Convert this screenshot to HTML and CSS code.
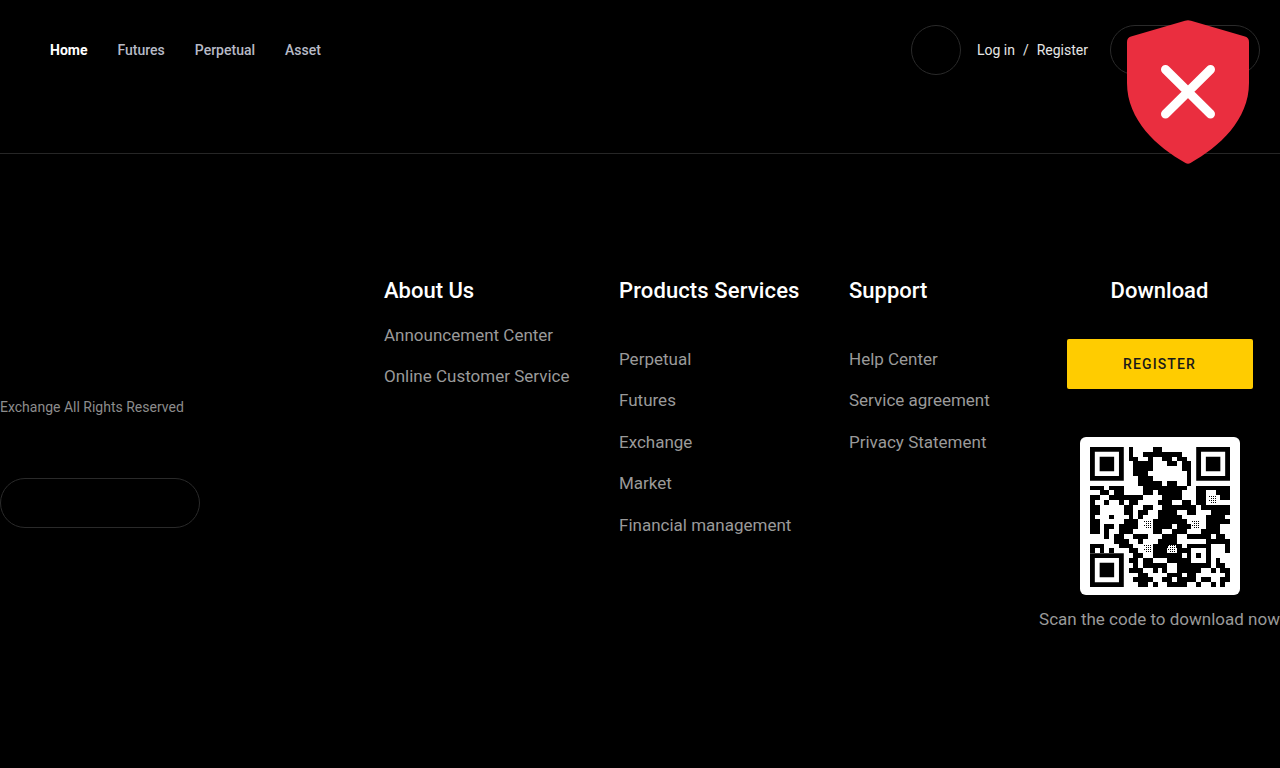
FILE: index.html
```html
<!DOCTYPE html>
<html lang="en">
<head>
<meta charset="utf-8">
<title>Exchange</title>
<link rel="stylesheet" href="styles.css">
</head>
<body>
<header class="header">
  <nav class="nav">
    <a class="nav-link active">Home</a>
    <a class="nav-link">Futures</a>
    <a class="nav-link">Perpetual</a>
    <a class="nav-link">Asset</a>
  </nav>
  <div class="actions">
    <span class="circle"></span>
    <div class="auth"><a>Log in</a><span>/</span><a>Register</a></div>
    <span class="pill"></span>
  </div>
</header>
<svg class="shield" viewBox="0 0 122 144" aria-hidden="true">
  <path class="shield-body" d="M58 .7Q61 -.2 64 .7L118 16.5Q122 17.7 122 22V63C122 100 92 127 63.5 143Q61 144.4 58.5 143C30 127 0 100 0 63V22Q0 17.7 4 16.5Z"/>
  <path class="shield-x" d="M38.5 49.5L83.5 94M83.5 49.5L38.5 94"/>
</svg>
<footer class="footer">
  <div class="brand">
    <p class="copy">Exchange All Rights Reserved</p>
    <span class="brand-pill"></span>
  </div>
  <div class="cols">
    <section class="col col-about">
      <h3>About Us</h3>
      <ul class="links">
        <li>Announcement Center</li>
        <li>Online Customer Service</li>
      </ul>
    </section>
    <section class="col col-products">
      <h3 class="wide">Products Services</h3>
      <ul class="links links-low">
        <li>Perpetual</li>
        <li>Futures</li>
        <li>Exchange</li>
        <li>Market</li>
        <li>Financial management</li>
      </ul>
    </section>
    <section class="col col-support">
      <h3>Support</h3>
      <ul class="links links-low">
        <li>Help Center</li>
        <li>Service agreement</li>
        <li>Privacy Statement</li>
      </ul>
    </section>
    <section class="col col-download">
      <h3>Download</h3>
      <button class="register" type="button">REGISTER</button>
      <div class="qr-card">
        <svg class="qr" viewBox="0 0 29 29" aria-label="QR code">
          <defs>
            <g id="patch">
              <rect class="qr-patch-bg" width="1.67" height="1.67"/>
              <path class="qr-patch-dots" d="M0 .21H1.67M.42 .63H1.67M0 1.04H1.67M.42 1.46H1.67"/>
            </g>
          </defs>
          <path class="qr-finder" d="M0 0h7v7h-7zM1 1v5h5v-5zM2 2h3v3h-3zM22 0h7v7h-7zM23 1v5h5v-5zM24 2h3v3h-3zM0 22h7v7h-7zM1 23v5h5v-5zM2 24h3v3h-3z"/>
          <path class="qr-runs" d="M8 .5h1M13 .5h2M8 1.5h1M11 1.5h8M8 2.5h2M12 2.5h1M15 2.5h2M18 2.5h2M9 3.5h4M16 3.5h2M19 3.5h2M9 4.5h4M19 4.5h2M9 5.5h3M20 5.5h1M10 6.5h3M20 6.5h1M10 7.5h4M14 7.5h1M16 7.5h2M20 7.5h1M0 8.5h3M4 8.5h3M11 8.5h9M22 8.5h7M2 9.5h2M5 9.5h2M11 9.5h2M14 9.5h5M22 9.5h2M26 9.5h3M0 10.5h2M4 10.5h7M15 10.5h4M22 10.5h2M27 10.5h2M0 11.5h1M3 11.5h1M6 11.5h1M8 11.5h2M14 11.5h3M19 11.5h2M22 11.5h2M0 12.5h2M7 12.5h2M11 12.5h2M15 12.5h7M23 12.5h6M0 13.5h2M7 13.5h2M10 13.5h2M14 13.5h4M20 13.5h2M25 13.5h4M0 14.5h1M4 14.5h1M8 14.5h1M10 14.5h1M14 14.5h5M24 14.5h4M0 15.5h2M7 15.5h3M13 15.5h7M24 15.5h5M0 16.5h2M3 16.5h2M6 16.5h4M13 16.5h4M18 16.5h3M24 16.5h3M0 17.5h2M3 17.5h1M6 17.5h3M13 17.5h2M17 17.5h3M23 17.5h4M3 18.5h1M5 18.5h2M9 18.5h3M15 18.5h3M20 18.5h5M26 18.5h2M5 19.5h3M10 19.5h1M14 19.5h4M24 19.5h5M0 20.5h3M6 20.5h3M13 20.5h3M16 20.5h3M20 20.5h5M28 20.5h1M0 21.5h1M2 21.5h1M4 21.5h1M8 21.5h2M13 21.5h3M18 21.5h3M24 21.5h1M28 21.5h1M9 22.5h2M13 22.5h6M20 22.5h1M22 22.5h1M24 22.5h1M8 23.5h2M11 23.5h2M16 23.5h5M24 23.5h1M26 23.5h1M9 24.5h1M11 24.5h5M18 24.5h7M26 24.5h2M8 25.5h3M13 25.5h1M15 25.5h1M18 25.5h5M25 25.5h1M27 25.5h2M10 26.5h2M16 26.5h3M20 26.5h2M28 26.5h1M9 27.5h4M15 27.5h2M18 27.5h4M23 27.5h2M27 27.5h2M10 28.5h2M13 28.5h1M16 28.5h4M22 28.5h1M25 28.5h1M27 28.5h1"/>
          <use href="#patch" x="24.6" y="10.1"/>
          <use href="#patch" x="11.2" y="15.2"/>
          <use href="#patch" x="21.2" y="15.2"/>
          <use href="#patch" x="11.2" y="20.2"/>
          <use href="#patch" x="16.2" y="20.2"/>
        </svg>
      </div>
      <p class="scan">Scan the code to download now</p>
    </section>
  </div>
</footer>
</body>
</html>
```
FILE: styles.css
```css
* { box-sizing: border-box; }
html, body { margin: 0; padding: 0; }
body {
  background: #000;
  color: #fff;
  font-family: Roboto, "Liberation Sans", sans-serif;
  height: 768px;
  overflow: hidden;
  position: relative;
}
.header {
  display: flex;
  justify-content: space-between;
  align-items: flex-start;
  height: 154px;
  padding: 25px 20px 0 50px;
  border-bottom: 1px solid #262626;
}
.nav { display: flex; gap: 30px; height: 50px; align-items: center; }
.nav-link { font-size: 14px; font-weight: 500; color: #b7bac6; }
.nav-link.active { color: #fff; font-weight: 700; }
.actions { display: flex; align-items: center; }
.circle {
  width: 50px; height: 50px;
  border: 1px solid #2a2a2a;
  border-radius: 50%;
  margin-right: 16px;
}
.auth { display: flex; gap: 8px; font-size: 14px; color: #e6e6e6; margin-right: 22px; }
.pill {
  width: 150px; height: 50px;
  border: 1px solid #2a2a2a;
  border-radius: 25px;
}
.shield { position: absolute; left: 1127px; top: 20px; width: 122px; height: 144px; }
.shield-body { fill: #ea2e3f; }
.shield-x { fill: none; stroke: #fff; stroke-width: 9; stroke-linecap: round; }
.footer {
  display: flex;
  justify-content: space-between;
  padding-top: 121px;
}
.brand { width: 200px; }
.copy { margin: 122px 0 0; font-size: 14px; line-height: 20px; color: #8c8c8c; }
.brand-pill {
  display: block;
  width: 200px; height: 50px;
  margin-top: 61px;
  border: 1px solid #2a2a2a;
  border-radius: 25px;
}
.cols { display: flex; gap: 50px; }
.col h3 { margin: 0; font-size: 22px; line-height: 32px; font-weight: 500; color: #fff; white-space: nowrap; }
.col h3.wide { letter-spacing: .12px; }
.col-about { width: 185px; }
.col-products { width: 180px; }
.col-support { width: 140px; }
.col-download { width: 241px; display: flex; flex-direction: column; align-items: center; }
.links {
  list-style: none;
  margin: 7.5px 0 0;
  padding: 0;
  font-size: 17px;
  line-height: 41.5px;
  color: #9a9a9a;
  white-space: nowrap;
}
.links-low { margin-top: 31.5px; }
.register {
  width: 186px; height: 50px;
  margin-top: 32px;
  background: #ffcc00;
  border: 0;
  border-radius: 2px;
  color: #1a1a1a;
  font: 500 14px Roboto, sans-serif;
  letter-spacing: 1.15px;
}
.qr-card {
  display: flex;
  justify-content: center;
  width: 160px; height: 158px;
  margin-top: 48px;
  padding-top: 10px;
  background: #fff;
  border-radius: 6px;
}
.qr { width: 140px; height: 140px; display: block; }
.qr-finder { fill: #000; fill-rule: evenodd; }
.qr-runs { fill: none; stroke: #000; stroke-width: 1; shape-rendering: crispEdges; }
.qr-patch-bg { fill: #fff; shape-rendering: crispEdges; }
.qr-patch-dots {
  fill: none;
  stroke: #000;
  stroke-width: .21;
  stroke-dasharray: .21 .21;
  shape-rendering: crispEdges;
}
.scan {
  margin: 10px 0 0;
  font-size: 17px;
  line-height: 28px;
  color: #9a9a9a;
  white-space: nowrap;
}
```
